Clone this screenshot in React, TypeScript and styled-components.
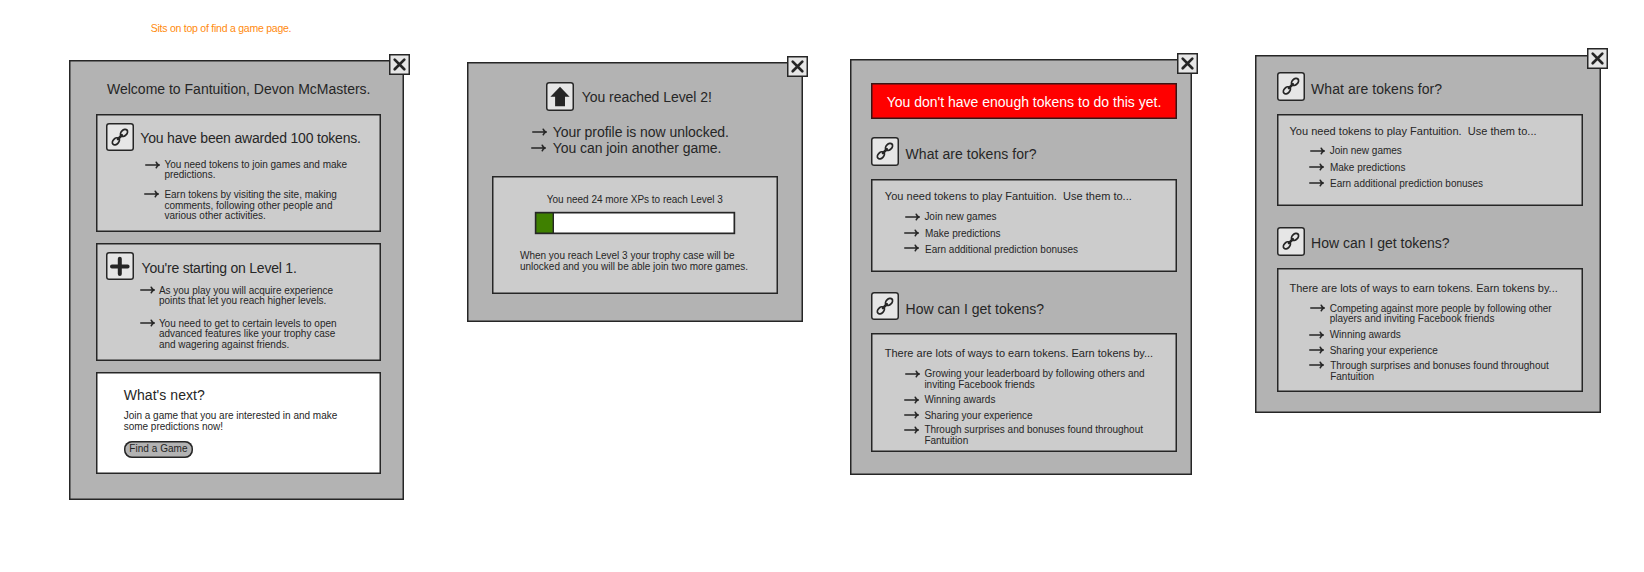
import React from "react";
import styled, { createGlobalStyle } from "styled-components";

const INK = "#262626";

const GlobalStyle = createGlobalStyle`
  body {
    margin: 0;
    background: #fff;
    color: ${INK};
    font-family: "Liberation Sans", Arial, sans-serif;
  }
  h1, h2, p, ul { margin: 0; padding: 0; font-weight: normal; }
`;

const Board = styled.main`
  display: flex;
  align-items: flex-start;
  box-sizing: border-box;
  width: 1644px;
  height: 572px;
  padding-left: 69px;
  overflow: hidden;
`;

const Column = styled.section<{ $top: number; $left?: number }>`
  flex: none;
  padding-top: ${(p) => p.$top}px;
  margin-left: ${(p) => p.$left ?? 0}px;
`;

const Note = styled.p`
  margin: 0 0 25.7px 81.7px;
  color: #ff8a0d;
  font-size: 10.5px;
  line-height: 12px;
  letter-spacing: -0.24px;
  white-space: nowrap;
`;

const Panel = styled.article<{ $width: number; $height: number; $inset: number }>`
  position: relative;
  display: flex;
  flex-direction: column;
  align-items: stretch;
  box-sizing: border-box;
  width: ${(p) => p.$width}px;
  height: ${(p) => p.$height}px;
  padding: 0 0 0 ${(p) => p.$inset}px;
  background: #b3b3b3;
  box-shadow: inset 0 0 0 1.5px ${INK};
`;

const CloseButton = styled.button<{ $overhang: number; $rise: number }>`
  position: absolute;
  top: ${(p) => -p.$rise}px;
  right: ${(p) => -p.$overhang}px;
  width: 21px;
  height: 21px;
  padding: 0;
  border: 0;
  background: #e6e6e6;
  box-shadow: inset 0 0 0 1.5px ${INK};
  svg { display: block; }
`;

const Card = styled.div<{ $gap: number; $width: number; $height: number; $plain?: boolean }>`
  flex: none;
  display: flex;
  flex-direction: column;
  width: ${(p) => p.$width}px;
  height: ${(p) => p.$height}px;
  margin-top: ${(p) => p.$gap}px;
  background: ${(p) => (p.$plain ? "#fff" : "#ccc")};
  box-shadow: inset 0 0 0 1.5px ${INK};
`;

const Alert = styled.div`
  flex: none;
  box-sizing: border-box;
  width: 306px;
  height: 36px;
  margin-top: 24px;
  padding: 11px 0 0 15.7px;
  background: #f00;
  box-shadow: inset 0 0 0 1.5px #3a1414;
  color: #fff;
`;

const Heading = styled.h2<{ $gap?: number; $indent?: number; $track?: number }>`
  flex: none;
  margin: ${(p) => p.$gap ?? 0}px 0 0 ${(p) => p.$indent ?? 0}px;
  font-size: 14px;
  line-height: 16px;
  letter-spacing: ${(p) => p.$track ?? 0}px;
  white-space: nowrap;
`;

const Header = styled.header<{ $gap: number; $indent?: number }>`
  flex: none;
  display: flex;
  align-items: flex-start;
  height: 29px;
  margin: ${(p) => p.$gap}px 0 0 ${(p) => p.$indent ?? 0}px;
`;

const IconTile = styled.span`
  flex: none;
  width: 28px;
  height: 28.5px;
  border-radius: 3px;
  background: #e6e6e6;
  box-shadow: inset 0 0 0 1.5px ${INK};
  svg { display: block; }
`;

const Lead = styled.p<{ $gap: number; $indent: number; $track?: number }>`
  flex: none;
  margin: ${(p) => p.$gap}px 0 0 ${(p) => p.$indent}px;
  font-size: 11px;
  line-height: 13px;
  letter-spacing: ${(p) => p.$track ?? 0}px;
  white-space: pre;
`;

const Copy = styled.p<{ $gap?: number; $indent?: number }>`
  flex: none;
  margin: ${(p) => p.$gap ?? 0}px 0 -0.4px ${(p) => p.$indent ?? 0}px;
  padding-top: 0.4px;
  font-size: 10px;
  line-height: 10.4px;
  letter-spacing: -0.01px;
  white-space: pre-line;
`;

const BigCopy = styled.p`
  padding-top: 0.4px;
  margin-bottom: -0.4px;
  font-size: 14px;
  line-height: 15.5px;
  letter-spacing: -0.05px;
  white-space: nowrap;
`;

const BulletRow = styled.div<{ $gap: number; $indent: number; $lead: number; $drop: number }>`
  flex: none;
  display: flex;
  align-items: flex-start;
  gap: ${(p) => p.$lead}px;
  margin: ${(p) => p.$gap}px 0 0 ${(p) => p.$indent}px;
  svg { flex: none; margin-top: ${(p) => p.$drop}px; margin-bottom: -4px; }
`;

const Meter = styled.div`
  flex: none;
  display: flex;
  width: 200px;
  height: 22.5px;
  margin: 6.6px 0 0 42.7px;
  background: #fff;
  box-shadow: 0 0 0 0.2px ${INK}, inset 0 0 0 1.5px ${INK};
`;

const MeterFill = styled.div`
  width: 19px;
  background: #3f8000;
  box-shadow: inset 0 0 0 1.4px ${INK};
`;

const PillButton = styled.button`
  flex: none;
  width: 69.5px;
  height: 17px;
  margin: 9.4px 0 0 27.7px;
  padding: 0;
  border: 0;
  border-radius: 8px;
  background: #b3b3b3;
  box-shadow: inset 0 0 0 1.5px ${INK};
  color: ${INK};
  font: 10px/16px "Liberation Sans", Arial, sans-serif;
  letter-spacing: 0.03px;
  white-space: nowrap;
`;

const Close = ({ overhang, rise = 6 }: { overhang: number; rise?: number }) => (
  <CloseButton aria-label="Close" $overhang={overhang} $rise={rise}>
    <svg width="21" height="21" viewBox="0 0 21 21" fill="none" stroke={INK} strokeWidth="2.7" strokeLinecap="round">
      <path d="M5.7 5.6 15.3 15.2M15.3 5.6 5.7 15.2" />
    </svg>
  </CloseButton>
);

const ChainIcon = () => (
  <svg width="28" height="29" viewBox="0 0 28 29" fill="none" stroke={INK} strokeWidth="1.8">
    <ellipse cx="18" cy="9.9" rx="4.1" ry="2.8" transform="rotate(-45 18 9.9)" />
    <ellipse cx="9.9" cy="18.3" rx="4.1" ry="2.8" transform="rotate(-45 9.9 18.3)" />
    <path d="M12 16.1 15.8 12.2" strokeWidth="2.6" strokeLinecap="round" />
  </svg>
);

const PlusIcon = () => (
  <svg width="28" height="29" viewBox="0 0 28 29" stroke={INK} strokeWidth="4" strokeLinecap="round">
    <path d="M13.8 6.7V22.1M6 14.4H21.6" />
  </svg>
);

const UpIcon = () => (
  <svg width="28" height="29" viewBox="0 0 28 29" fill={INK}>
    <path d="M14 4.8 23.6 14.7H19V24.3H9.1V14.7H4.4Z" />
  </svg>
);

const Arrow = () => (
  <svg width="15" height="8" viewBox="0 0 15 8" fill="none" stroke={INK} strokeWidth="1.6" strokeLinecap="round">
    <path d="M.8 4H14M11.3 1.3Q12.2 3.3 14.1 4 12.2 4.7 11.3 6.7" />
  </svg>
);

type BulletProps = {
  gap: number;
  indent: number;
  lead: number;
  drop: number;
  big?: boolean;
  children: React.ReactNode;
};

const Bullet = ({ gap, indent, lead, drop, big, children }: BulletProps) => (
  <BulletRow $gap={gap} $indent={indent} $lead={lead} $drop={drop}>
    <Arrow />
    {big ? <BigCopy>{children}</BigCopy> : <Copy>{children}</Copy>}
  </BulletRow>
);

const WelcomePanel = () => (
  <Panel $width={335} $height={440} $inset={27}>
    <Close overhang={6} />
    <Heading $gap={21} $indent={11}>Welcome to Fantuition, Devon McMasters.</Heading>
    <Card $gap={17} $width={285} $height={118}>
      <Header $gap={9} $indent={9.7}>
        <IconTile><ChainIcon /></IconTile>
        <Heading $gap={6.7} $indent={6.6} $track={-0.19}>You have been awarded 100 tokens.</Heading>
      </Header>
      <Bullet gap={7.3} indent={49} lead={4.4} drop={1.4}>
        {"You need tokens to join games and make\npredictions."}
      </Bullet>
      <Bullet gap={9.7} indent={47.6} lead={5.8} drop={0.7}>
        {"Earn tokens by visiting the site, making\ncomments, following other people and\nvarious other activities."}
      </Bullet>
    </Card>
    <Card $gap={11} $width={285} $height={118}>
      <Header $gap={9} $indent={9.7}>
        <IconTile><PlusIcon /></IconTile>
        <Heading $gap={8.4} $indent={7.9} $track={-0.22}>You're starting on Level 1.</Heading>
      </Header>
      <Bullet gap={4.2} indent={43.7} lead={4.2} drop={0.6}>
        {"As you play you will acquire experience\npoints that let you reach higher levels."}
      </Bullet>
      <Bullet gap={12.5} indent={43.7} lead={4.2} drop={0.8}>
        {"You need to get to certain levels to open\nadvanced features like your trophy case\nand wagering against friends."}
      </Bullet>
    </Card>
    <Card $gap={11} $width={285} $height={102} $plain>
      <Heading $gap={15} $indent={27.7} $track={0.06}>What's next?</Heading>
      <Copy $gap={7.8} $indent={27.7}>
        {"Join a game that you are interested in and make\nsome predictions now!"}
      </Copy>
      <PillButton>Find a Game</PillButton>
    </Card>
  </Panel>
);

const LevelPanel = () => (
  <Panel $width={336} $height={260} $inset={25}>
    <Close overhang={5} />
    <Header $gap={20} $indent={54}>
      <IconTile><UpIcon /></IconTile>
      <Heading $gap={7.2} $indent={7.8} $track={-0.05}>You reached Level 2!</Heading>
    </Header>
    <Bullet gap={14.1} indent={40} lead={5.7} drop={3.2} big>Your profile is now unlocked.</Bullet>
    <Bullet gap={0} indent={39} lead={6.7} drop={3.7} big>You can join another game.</Bullet>
    <Card $gap={19.9} $width={286} $height={118.5}>
      <Copy $gap={18.7} $indent={54.8}>You need 24 more XPs to reach Level 3</Copy>
      <Meter><MeterFill /></Meter>
      <Copy $gap={16.6} $indent={28}>
        {"When you reach Level 3 your trophy case will be\nunlocked and you will be able join two more games."}
      </Copy>
    </Card>
  </Panel>
);

const NotEnoughPanel = () => (
  <Panel $width={341.5} $height={416} $inset={21}>
    <Close overhang={6.5} />
    <Alert>
      <Heading>You don't have enough tokens to do this yet.</Heading>
    </Alert>
    <Header $gap={18}>
      <IconTile><ChainIcon /></IconTile>
      <Heading $gap={9.3} $indent={6.6} $track={0.05}>What are tokens for?</Heading>
    </Header>
    <Card $gap={12.6} $width={306} $height={93.4}>
      <Lead $gap={11.5} $indent={13.8} $track={0.02}>{"You need tokens to play Fantuition.  Use them to..."}</Lead>
      <Bullet gap={8.2} indent={33.7} lead={4.7} drop={1.6}>Join new games</Bullet>
      <Bullet gap={6.6} indent={33} lead={6} drop={0.3}>Make predictions</Bullet>
      <Bullet gap={5.6} indent={33} lead={6} drop={0.1}>Earn additional prediction bonuses</Bullet>
    </Card>
    <Header $gap={20}>
      <IconTile><ChainIcon /></IconTile>
      <Heading $gap={8.7} $indent={6.6}>How can I get tokens?</Heading>
    </Header>
    <Card $gap={12} $width={306} $height={119}>
      <Lead $gap={14} $indent={13.8} $track={-0.01}>There are lots of ways to earn tokens. Earn tokens by...</Lead>
      <Bullet gap={8.8} indent={33.7} lead={4.7} drop={0.9}>
        {"Growing your leaderboard by following others and\ninviting Facebook friends"}
      </Bullet>
      <Bullet gap={5.2} indent={33} lead={5.4} drop={1.2}>Winning awards</Bullet>
      <Bullet gap={5.6} indent={33} lead={5.4} drop={0.2}>Sharing your experience</Bullet>
      <Bullet gap={3.6} indent={33} lead={5.4} drop={1.7}>
        {"Through surprises and bonuses found throughout\nFantuition"}
      </Bullet>
    </Card>
  </Panel>
);

const TokensPanel = () => (
  <Panel $width={346} $height={358} $inset={22}>
    <Close overhang={7} rise={7} />
    <Header $gap={17}>
      <IconTile><ChainIcon /></IconTile>
      <Heading $gap={9.3} $indent={6.1} $track={0.05}>What are tokens for?</Heading>
    </Header>
    <Card $gap={13} $width={305.5} $height={92}>
      <Lead $gap={10.5} $indent={12.5} $track={0.02}>{"You need tokens to play Fantuition.  Use them to..."}</Lead>
      <Bullet gap={8.3} indent={32.5} lead={5.2} drop={1.7}>Join new games</Bullet>
      <Bullet gap={6.3} indent={31.8} lead={6.2} drop={0.5}>Make predictions</Bullet>
      <Bullet gap={5.6} indent={31.8} lead={6.2} drop={0.5}>Earn additional prediction bonuses</Bullet>
    </Card>
    <Header $gap={21}>
      <IconTile><ChainIcon /></IconTile>
      <Heading $gap={8} $indent={6.1}>How can I get tokens?</Heading>
    </Header>
    <Card $gap={12} $width={305.5} $height={123.5}>
      <Lead $gap={13.7} $indent={12.5} $track={-0.01}>There are lots of ways to earn tokens. Earn tokens by...</Lead>
      <Bullet gap={8.5} indent={32.5} lead={5.2} drop={1.1}>
        {"Competing against more people by following other\nplayers and inviting Facebook friends"}
      </Bullet>
      <Bullet gap={5.2} indent={31.8} lead={5.9} drop={1.8}>Winning awards</Bullet>
      <Bullet gap={5.9} indent={31.8} lead={5.9} drop={0.2}>Sharing your experience</Bullet>
      <Bullet gap={4.9} indent={31.8} lead={6.4} drop={0.5}>
        {"Through surprises and bonuses found throughout\nFantuition"}
      </Bullet>
    </Card>
  </Panel>
);

export default function App() {
  return (
    <>
      <GlobalStyle />
      <Board>
        <Column $top={22.3}>
          <Note>Sits on top of find a game page.</Note>
          <WelcomePanel />
        </Column>
        <Column $top={62} $left={63}>
          <LevelPanel />
        </Column>
        <Column $top={59} $left={47}>
          <NotEnoughPanel />
        </Column>
        <Column $top={55} $left={63.5}>
          <TokensPanel />
        </Column>
      </Board>
    </>
  );
}
